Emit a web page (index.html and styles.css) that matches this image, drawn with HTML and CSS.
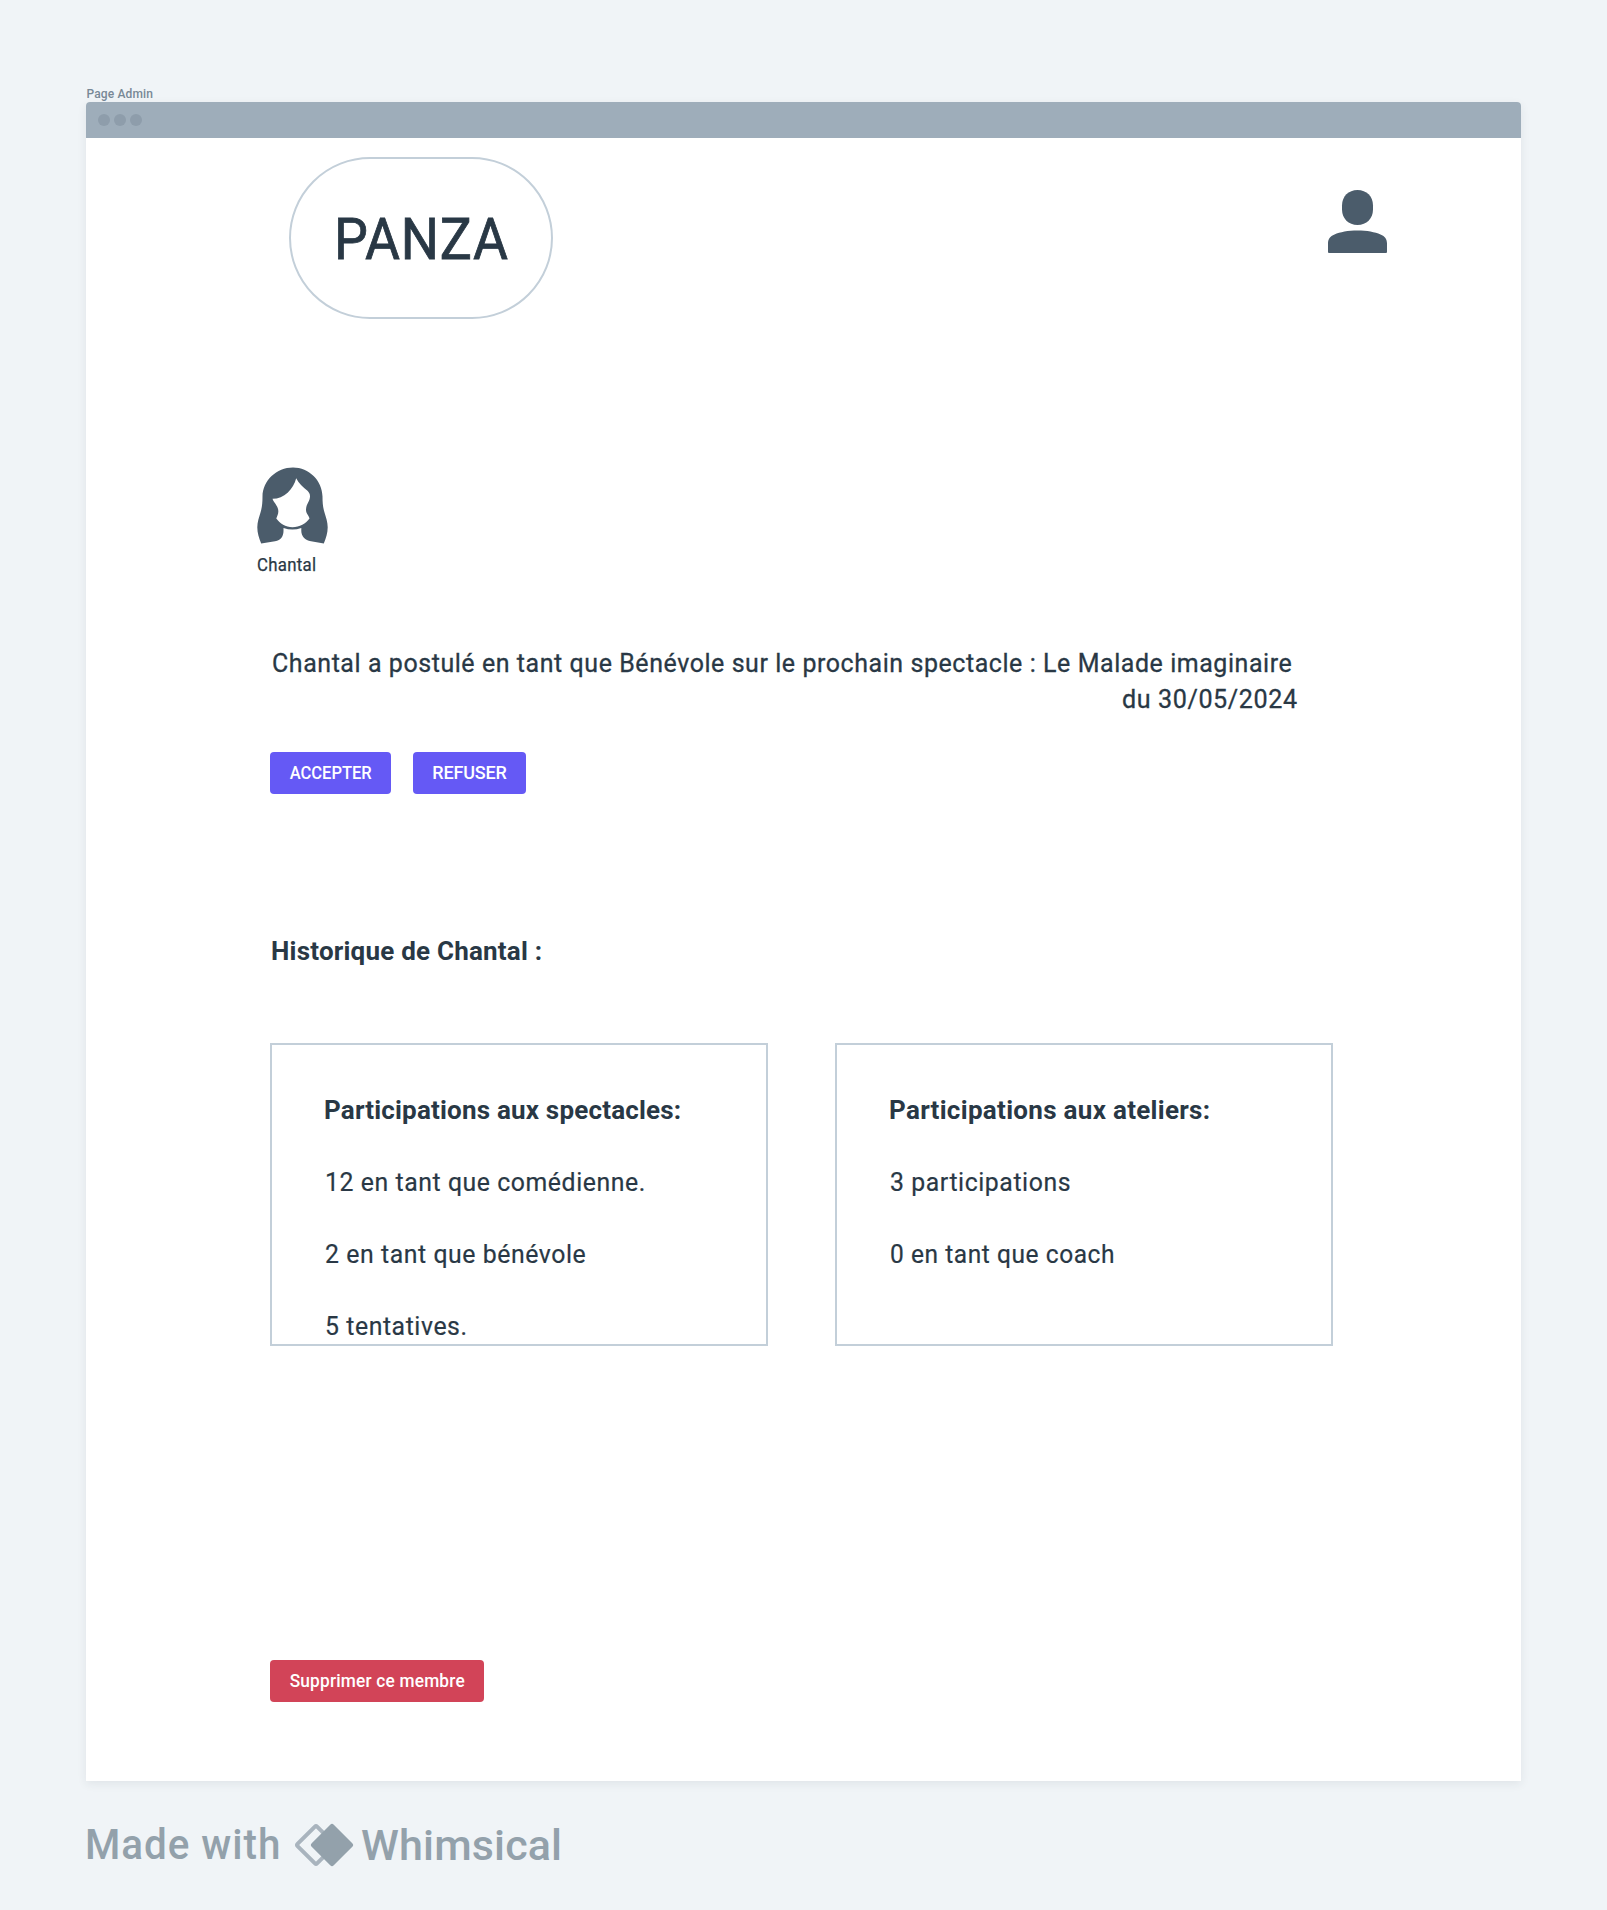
FILE: index.html
```
<!DOCTYPE html>
<html lang="fr">
<head>
<meta charset="utf-8">
<title>Page Admin</title>
<link rel="stylesheet" href="styles.css">
</head>
<body>
<div class="frame-label"><span>Page Admin</span></div>
<main class="window">
  <div class="titlebar"><i class="dot"></i><i class="dot"></i><i class="dot"></i></div>
  <header class="header">
    <div class="logo"><span>PANZA</span></div>
    <svg class="user-icon" width="60" height="64" viewBox="0 0 60 64" fill="#4b5c6b">
      <path d="M29.5 0C38.5 0 45 6.3 45 15.500V19.500C45 28.500 38.500 35 29.500 35C20.500 35 14 28.500 14 19.500V15.500C14 6.300 20.500 0 29.500 0Z"/>
      <path d="M29.500 40.500C39 40.500 47 42 52.500 44.500C57 46.500 59 49 59 53.500V62Q59 63 58 63H1Q0 63 0 62V53.500C0 49 2 46.500 6.500 44.500C12 42 20 40.500 29.500 40.500Z"/>
    </svg>
  </header>
  <section class="member">
    <svg class="avatar" width="72" height="78" viewBox="0 0 72 78">
      <path fill="#4b5c6b" fill-rule="evenodd" d="M36 0.500C52 0.500 65.300 13.500 65.500 29.500C65.500 36 66 40.500 67.500 45.500C69 50.500 70.700 55 70.700 60.300C70.700 66 69 71 66.800 76.500L54 74.300C48 73.500 44.300 69 44.300 64V60.900Q35.500 64.200 26.500 60.900V64C26.500 69 24 73.500 18 74.300L4.200 76.500C2 71 0.300 66 0.300 60.300C0.300 55 2 50.500 3.500 45.500C5 40.500 5.500 36 5.500 29.500C5.700 13.500 19.500 0.500 36 0.500ZM39.200 11.200C36.500 22.200 27 31.700 15.500 31.800C16.800 35.900 21 38.700 21.300 43.700C21.600 47.200 20 49.200 19.300 51.500C23 56.700 28.500 60.200 35.500 60.200C42.500 60.200 49 56.700 52.500 51.500C52 48.700 49 46.700 49 42.700C49 36.700 53 34.200 53 29.200C53 26.700 52 25.200 50.500 23.700C46 20.200 41.500 16.200 39.200 11.200Z"/>
    </svg>
    <div class="member-name"><span>Chantal</span></div>
  </section>
  <section class="request">
    <p class="line"><span class="announce">Chantal a postulé en tant que Bénévole sur le prochain spectacle : Le Malade imaginaire</span></p>
    <p class="line line-end"><span>du 30/05/2024</span></p>
    <div class="actions">
      <button class="btn accept"><span>ACCEPTER</span></button>
      <button class="btn refuse"><span>REFUSER</span></button>
    </div>
  </section>
  <h2 class="history-title"><span>Historique de Chantal :</span></h2>
  <section class="cards">
    <article class="card shows">
      <h3><span>Participations aux spectacles:</span></h3>
      <p><span>12 en tant que comédienne.</span></p>
      <p><span>2 en tant que bénévole</span></p>
      <p><span>5 tentatives.</span></p>
    </article>
    <article class="card workshops">
      <h3><span>Participations aux ateliers:</span></h3>
      <p><span>3 participations</span></p>
      <p class="tight"><span>0 en tant que coach</span></p>
    </article>
  </section>
  <button class="btn delete"><span>Supprimer ce membre</span></button>
</main>
<footer class="credit">
  <span class="made">Made with</span>
  <svg class="mark" width="60" height="44" viewBox="0 0 60 44">
    <rect x="8.200" y="8.200" width="27.600" height="27.600" rx="1.500" transform="rotate(45 22 22)" fill="none" stroke="#a9b4be" stroke-width="4"/>
    <rect x="22.400" y="6.400" width="31.200" height="31.200" rx="2.500" transform="rotate(45 38 22)" fill="#93a1ab"/>
  </svg>
  <span class="brand">Whimsical</span>
</footer>
</body>
</html>
```
FILE: styles.css
```
* { box-sizing: border-box; }
body {
  margin: 0;
  min-height: 1910px;
  padding: 87px 86px 0;
  background: #f0f4f7;
  color: #293845;
  font-family: Roboto, "Liberation Sans", sans-serif;
}
p, h2, h3 { margin: 0; }
span { display: inline-block; white-space: nowrap; }
.frame-label {
  height: 15px;
  padding-left: 0.5px;
  font-size: 12px;
  font-weight: 500;
  line-height: 14px;
  letter-spacing: 0.13px;
  color: #788896;
}
.window {
  display: flex;
  flex-direction: column;
  align-items: flex-start;
  width: 1434.5px;
  height: 1678.5px;
  border-radius: 4px 4px 0 0;
  background: #fff;
  box-shadow: 0 3px 10px rgba(41, 56, 69, 0.08);
}
.titlebar {
  display: flex;
  align-items: center;
  gap: 4px;
  width: 100%;
  height: 36px;
  padding-left: 12px;
  border-radius: 4px 4px 0 0;
  background: #9eadba;
}
.dot { width: 12px; height: 12px; border-radius: 50%; background: #8e9dab; }
.header {
  display: flex;
  justify-content: space-between;
  width: 100%;
  padding: 19px 132.5px 0 203px;
}
.logo {
  display: flex;
  align-items: center;
  justify-content: center;
  width: 264px;
  height: 162px;
  padding: 2px 0 0 1px;
  border: 2px solid #c3cfd9;
  border-radius: 81px;
  font-size: 58px;
  line-height: 68px;
  letter-spacing: 0.8px;
  -webkit-text-stroke: 0.8px currentColor;
}
.logo span { transform: scaleX(0.925); }
.user-icon { margin-top: 33px; }
.member { margin: 148px 0 0 171px; }
.avatar { display: block; }
.member-name {
  margin-top: 8px;
  font-size: 17.5px;
  line-height: 24px;
  letter-spacing: 0.3px;
  -webkit-text-stroke: 0.25px currentColor;
}
.member-name span { transform: scaleX(0.96); transform-origin: left; }
.request { width: 1027px; margin: 68px 0 0 185px; font-size: 26px; line-height: 36px; }
.line { height: 36px; letter-spacing: 0.6px; -webkit-text-stroke: 0.3px currentColor; }
.line .announce { margin-left: 0.5px; transform: scaleX(0.9595); transform-origin: left; }
.line-end { text-align: right; }
.line-end span { transform: scaleX(0.967); transform-origin: right; }
.actions { display: flex; gap: 22px; margin: 35px 0 0 -1px; }
.btn {
  display: flex;
  align-items: center;
  justify-content: center;
  height: 42px;
  padding: 0;
  border: 0;
  border-radius: 4px;
  background: #6559f5;
  color: #fff;
  font: 500 18px/24px Roboto, "Liberation Sans", sans-serif;
}
.accept { width: 121px; }
.accept span { transform: scaleX(0.918); }
.refuse { width: 113px; letter-spacing: -0.15px; }
.history-title {
  margin: 139px 0 0 185px;
  font-size: 26px;
  font-weight: 700;
  line-height: 36px;
  letter-spacing: 0.21px;
}
.cards { display: flex; gap: 67px; margin: 74px 0 0 184px; }
.card {
  display: flex;
  flex-direction: column;
  gap: 36px;
  width: 498px;
  height: 303px;
  padding: 47px 0 0 52px;
  border: 2px solid #c3cfd9;
  font-size: 26px;
  line-height: 36px;
  letter-spacing: 0.6px;
}
.card p { height: 36px; padding-left: 0.5px; -webkit-text-stroke: 0.2px currentColor; }
.card p span { transform: scaleX(0.954); transform-origin: left; }
.card .tight span { transform: scaleX(0.942); }
.card h3 { height: 36px; font-size: 26px; font-weight: 700; }
.shows h3 { letter-spacing: 0.19px; }
.workshops h3 { letter-spacing: 0.3px; }
.delete { width: 214px; margin: 314px 0 0 184px; background: #d24458; letter-spacing: 0.2px; }
.delete span { transform: scaleX(0.96); }
.credit {
  display: flex;
  align-items: center;
  height: 60px;
  margin-top: 34.5px;
  color: #93a1ab;
  font-size: 42px;
  font-weight: 500;
  line-height: 60px;
}
.made { width: 209.5px; margin-left: -1.5px; letter-spacing: 1px; transform: scaleX(0.962); transform-origin: left; }
.brand { margin-left: 7px; font-size: 43px; letter-spacing: 0.15px; }
```
